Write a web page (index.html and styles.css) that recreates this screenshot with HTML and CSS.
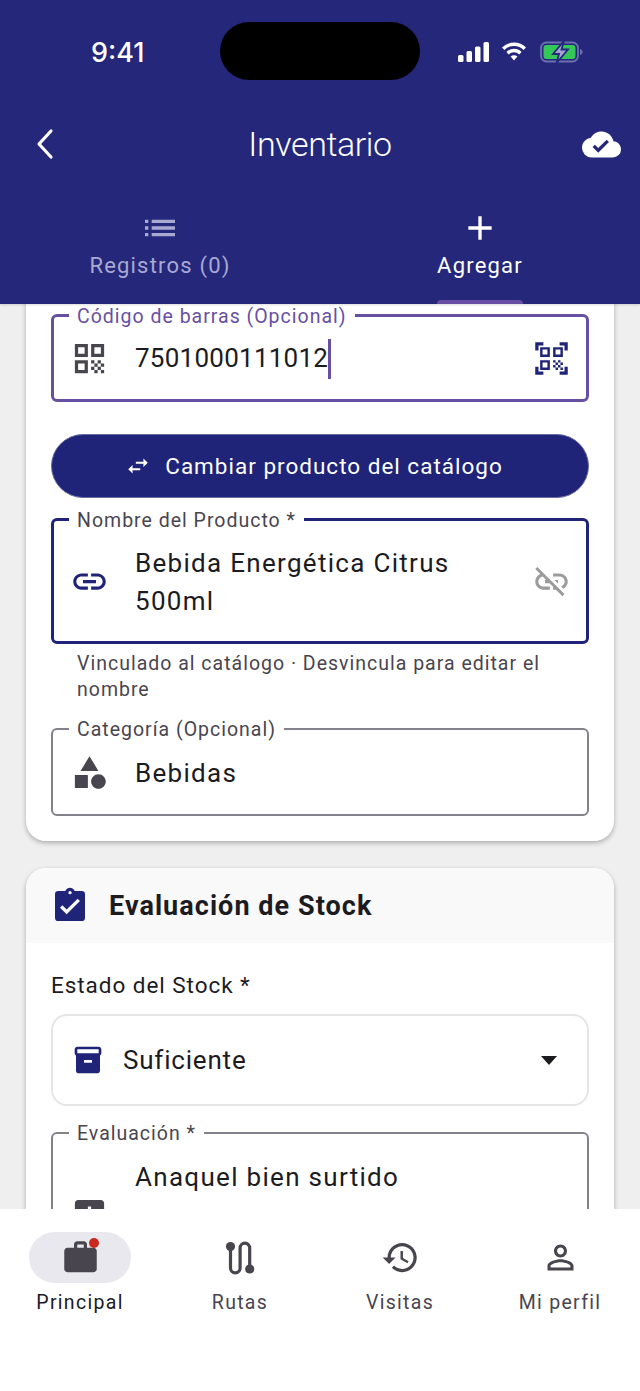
FILE: index.html
```html
<!DOCTYPE html>
<html lang="es">
<head>
<meta charset="utf-8">
<title>Inventario</title>
<link rel="stylesheet" href="styles.css">
</head>
<body>
<div class="app">
  <header class="header">
    <div class="status">
      <span class="time">9:41</span>
      <div class="island"></div>
      <div class="status-icons">
        <svg class="sig" viewBox="0 0 31 20"><rect x="0" y="13" width="5.5" height="7" rx="1.5"/><rect x="8.5" y="9" width="5.5" height="11" rx="1.5"/><rect x="17" y="4.5" width="5.5" height="15.5" rx="1.5"/><rect x="25.5" y="0" width="5.5" height="20" rx="1.5"/></svg>
        <svg class="wifi" viewBox="0 0 26 20"><path class="wifi-arc" d="M2.200 6.800a15.200 15.200 0 0 1 21.600 0"/><path class="wifi-arc" d="M6.600 11.200a9 9 0 0 1 12.800 0"/><path d="M9.600 14.600a4.800 4.800 0 0 1 6.800 0L13 18.500z"/></svg>
        <svg class="batt" viewBox="0 0 44 22"><rect x="1" y="1.500" width="37" height="19" rx="5.500" fill="none" stroke="#6d70ad" stroke-width="1.800"/><rect x="3.500" y="4" width="32" height="14" rx="3" fill="#34c759"/><path d="M40 8v6c1.600-.5 2.600-1.600 2.600-3S41.600 8.500 40 8z" fill="#6d70ad"/><path d="M24 0L13 13h6l-2.500 9L28 8.500h-6.500z" fill="#a2a4d4" stroke="#25277a" stroke-width="1.800"/></svg>
      </div>
    </div>
    <div class="titlebar">
      <svg class="back" viewBox="0 0 20 32"><path d="M16 3L4 16l12 13"/></svg>
      <h1 class="title">Inventario</h1>
      <svg class="cloud" viewBox="0 0 24 24"><path fill-rule="evenodd" d="M19.350 10.030C18.670 6.590 15.640 4 12 4 9.110 4 6.600 5.640 5.350 8.030 2.340 8.360 0 10.900 0 14a6 6 0 0 0 6 6h13a5 5 0 0 0 5-5c0-2.640-2.050-4.780-4.650-4.970M10 17l-3.500-3.500 1.410-1.410L10 14.170 15.180 9l1.410 1.410L10 17z"/></svg>
    </div>
    <div class="tabs">
      <div class="tab">
        <svg class="tab-icon" viewBox="0 0 24 24"><path d="M3 13h2v-2H3v2zm0 4h2v-2H3v2zm0-8h2V7H3v2zm4 4h14v-2H7v2zm0 4h14v-2H7v2zM7 7v2h14V7H7z"/></svg>
        <span class="tab-label">Registros (0)</span>
      </div>
      <div class="tab active">
        <svg class="tab-icon" viewBox="0 0 24 24"><path d="M19 13h-6v6h-2v-6H5v-2h6V5h2v6h6v2z"/></svg>
        <span class="tab-label">Agregar</span>
        <span class="indicator"></span>
      </div>
    </div>
  </header>

  <main class="main">
    <div class="scroll">
      <section class="card card-first">
        <div class="field focused">
          <span class="float-label">Código de barras (Opcional)</span>
          <svg class="icon-left" viewBox="0 0 24 24"><path d="M3 11h8V3H3v8zm2-6h4v4H5V5zM3 21h8v-8H3v8zm2-6h4v4H5v-4zM13 3v8h8V3h-8zm6 6h-4V5h4v4zM13 13h2v2h-2zM15 15h2v2h-2zM13 17h2v2h-2zM15 19h2v2h-2zM17 17h2v2h-2zM17 13h2v2h-2zM19 15h2v2h-2zM19 19h2v2h-2z"/></svg>
          <div class="value">7501000111012<span class="caret"></span></div>
          <svg class="icon-right navy" viewBox="0 0 24 24"><path d="M9.500 6.500v3h-3v-3h3M11 5H5v6h6V5zm-1.500 9.500v3h-3v-3h3M11 13H5v6h6v-6zm6.500-6.500v3h-3v-3h3M19 5h-6v6h6V5zm-6 8h1.500v1.500H13V13zm1.500 1.500H16V16h-1.500v-1.500zM16 13h1.500v1.500H16V13zm-3 3h1.500v1.500H13V16zm1.500 1.500H16V19h-1.500v-1.500zM16 16h1.500v1.500H16V16zm1.500-1.500H19V16h-1.500v-1.500zm0 3H19V19h-1.500v-1.500zM22 7h-2V4h-3V2h5v5zm0 15v-5h-2v3h-3v2h5zM2 22h5v-2H4v-3H2v5zM2 2v5h2V4h3V2H2z"/></svg>
        </div>

        <button class="swap-btn" type="button">
          <svg class="swap-icon" viewBox="0 0 24 24"><path d="M21 9l-4-4v3h-7v2h7v3M7 11l-4 4 4 4v-3h7v-2H7v-3z"/></svg>
          <span>Cambiar producto del catálogo</span>
        </button>

        <div class="field linked">
          <span class="float-label">Nombre del Producto *</span>
          <svg class="icon-left navy" viewBox="0 0 24 24"><path d="M3.900 12c0-1.710 1.390-3.100 3.100-3.100h4V7H7c-2.760 0-5 2.240-5 5s2.240 5 5 5h4v-1.900H7c-1.710 0-3.100-1.390-3.100-3.100zM8 13h8v-2H8v2zm9-6h-4v1.900h4c1.710 0 3.100 1.390 3.100 3.100s-1.390 3.100-3.100 3.100h-4V17h4c2.760 0 5-2.240 5-5s-2.240-5-5-5z"/></svg>
          <div class="value">Bebida Energética Citrus 500ml</div>
          <svg class="icon-right muted" viewBox="0 0 24 24"><path d="M17 7h-4v1.900h4c1.710 0 3.100 1.390 3.100 3.100 0 1.430-.980 2.630-2.310 2.980l1.460 1.460C20.880 15.610 22 13.950 22 12c0-2.760-2.240-5-5-5zm-1 4h-2.190l2 2H16zM2 4.270l3.110 3.110C3.290 8.120 2 9.910 2 12c0 2.760 2.240 5 5 5h4v-1.900H7c-1.710 0-3.100-1.390-3.100-3.100 0-1.590 1.210-2.900 2.760-3.070L8.730 11H8v2h2.730L13 15.270V17h1.730l4.010 4L20 19.740 3.270 3 2 4.270z"/></svg>
        </div>
        <p class="helper">Vinculado al catálogo · Desvincula para editar el nombre</p>

        <div class="field plain">
          <span class="float-label">Categoría (Opcional)</span>
          <svg class="icon-left" viewBox="0 0 24 24"><path d="M11 13.500v8H3v-8h8zM12 2l5.500 9h-11L12 2zm5.500 11c2.500 0 4.500 2 4.500 4.500S20 22 17.500 22 13 20 13 17.500s2-4.500 4.500-4.500z"/></svg>
          <div class="value">Bebidas</div>
        </div>
      </section>

      <section class="card card-second">
        <div class="card-head">
          <svg class="head-icon" viewBox="0 0 24 24"><path fill-rule="evenodd" d="M19 3h-4.180C14.400 1.840 13.300 1 12 1s-2.400.840-2.820 2H5a2 2 0 0 0-2 2v14a2 2 0 0 0 2 2h14a2 2 0 0 0 2-2V5a2 2 0 0 0-2-2M12 3a1 1 0 1 1 0 2 1 1 0 0 1 0-2m-2 14l-4-4 1.410-1.410L10 14.170l6.590-6.590L18 9l-8 8z"/></svg>
          <h2 class="head-title">Evaluación de Stock</h2>
        </div>
        <div class="card-body">
          <p class="stock-label">Estado del Stock *</p>
          <div class="select">
            <svg class="select-icon" viewBox="0 0 24 24"><path d="M20 2H4c-1 0-2 .900-2 2v3.010c0 .720.430 1.340 1 1.690V20c0 1.100 1.100 2 2 2h14c.900 0 2-.900 2-2V8.700c.570-.350 1-.970 1-1.690V4c0-1.100-1-2-2-2zm-5 12H9v-2h6v2zm5-7H4V4l16-.020V7z"/></svg>
            <span class="select-value">Suficiente</span>
            <span class="select-arrow"></span>
          </div>
          <div class="field plain">
            <span class="float-label">Evaluación *</span>
            <svg class="icon-left" viewBox="0 0 24 24"><path d="M19 3H5c-1.110 0-2 .900-2 2v14c0 1.100.890 2 2 2h14c1.100 0 2-.900 2-2V5c0-1.110-.900-2-2-2zm-2 10h-4v4h-2v-4H7v-2h4V7h2v4h4v2z"/></svg>
            <div class="value">Anaquel bien surtido<br>&nbsp;<br>&nbsp;</div>
          </div>
        </div>
      </section>
    </div>
  </main>

  <nav class="nav">
    <div class="nav-item current">
      <div class="nav-pill">
        <svg class="nav-icon" viewBox="0 0 24 24"><path d="M20 6h-4V4c0-1.110-.890-2-2-2h-4c-1.110 0-2 .890-2 2v2H4c-1.110 0-1.990.890-1.990 2L2 19c0 1.110.890 2 2 2h16c1.110 0 2-.890 2-2V8c0-1.110-.890-2-2-2zm-6 0h-4V4h4v2z"/></svg>
        <span class="dot"></span>
      </div>
      <span class="nav-label">Principal</span>
    </div>
    <div class="nav-item">
      <div class="nav-pill">
        <svg class="nav-icon route" viewBox="0 0 30 34"><path d="M5.500 5v22a4.800 4.800 0 0 0 9.600 0V7a4.800 4.800 0 0 1 9.600 0v22" fill="none"/><circle cx="5.500" cy="5.500" r="4.600"/><circle cx="24.700" cy="28" r="4.600"/></svg>
      </div>
      <span class="nav-label">Rutas</span>
    </div>
    <div class="nav-item">
      <div class="nav-pill">
        <svg class="nav-icon" viewBox="0 0 24 24"><path d="M13 3c-4.970 0-9 4.030-9 9H1l3.890 3.890.070.140L9 12H6c0-3.870 3.130-7 7-7s7 3.130 7 7-3.130 7-7 7c-1.930 0-3.680-.790-4.940-2.060l-1.420 1.420C8.270 19.990 10.510 21 13 21c4.970 0 9-4.030 9-9s-4.030-9-9-9zm-1 5v5l4.280 2.540.720-1.210-3.500-2.080V8H12z"/></svg>
      </div>
      <span class="nav-label">Visitas</span>
    </div>
    <div class="nav-item">
      <div class="nav-pill">
        <svg class="nav-icon" viewBox="0 0 24 24"><path d="M12 5.900c1.160 0 2.100.940 2.100 2.100s-.940 2.100-2.100 2.100S9.900 9.160 9.900 8s.940-2.100 2.100-2.100m0 9c2.970 0 6.100 1.460 6.100 2.100v1.100H5.900V17c0-.640 3.130-2.100 6.100-2.100M12 4C9.790 4 8 5.790 8 8s1.790 4 4 4 4-1.790 4-4-1.790-4-4-4zm0 9c-2.670 0-8 1.340-8 4v3h16v-3c0-2.660-5.330-4-8-4z"/></svg>
      </div>
      <span class="nav-label">Mi perfil</span>
    </div>
  </nav>
</div>
</body>
</html>
```

FILE: styles.css
```css
* { box-sizing: border-box; }
html, body { margin: 0; padding: 0; height: 100%; }
body { font-family: Roboto, "Noto Sans", sans-serif; color: #1c1b1f; background: #efefef; }
.app { width: 640px; height: 1391px; display: flex; flex-direction: column; overflow: hidden; }

.header { position: relative; z-index: 2; height: 304px; flex: none; background: #25277a; color: #fff; box-shadow: 0 1px 2px rgba(0,0,0,.15); }
.status { position: relative; height: 104px; display: flex; align-items: center; justify-content: space-between; padding: 0 56px 0 91px; }
.time { font-family: Inter, Roboto, sans-serif; font-size: 27px; font-weight: 500; letter-spacing: 0; }
.island { position: absolute; left: 220px; top: 22px; width: 200px; height: 58px; border-radius: 29px; background: #000; }
.status-icons { display: flex; align-items: center; gap: 12px; }
.sig { width: 31px; height: 20px; fill: #fff; }
.wifi { width: 26px; height: 20px; fill: #fff; }
.wifi-arc { fill: none; stroke: #fff; stroke-width: 3.400; }
.batt { width: 44px; height: 22px; margin-left: 1px; }

.titlebar { height: 80px; display: flex; align-items: center; justify-content: space-between; padding: 0 19px 0 35px; position: relative; }
.back { width: 20px; height: 32px; fill: none; stroke: #fff; stroke-width: 3.200; stroke-linecap: round; stroke-linejoin: round; }
.title { position: absolute; left: 0; right: 0; top: 0; margin: 0; text-align: center; font-size: 34px; line-height: 80px; font-weight: 300; letter-spacing: -0.400px; }
.cloud { width: 39px; height: 39px; fill: #fff; }

.tabs { display: flex; height: 120px; }
.tab { position: relative; flex: 1; display: flex; flex-direction: column; align-items: center; padding-top: 24px; color: #a8a9d3; }
.tab.active { color: #fff; }
.tab-icon { width: 40px; height: 40px; fill: currentColor; display: block; }
.tab-label { font-size: 22px; line-height: 36px; letter-spacing: 1.200px; }
.indicator { position: absolute; bottom: 0; left: 117px; width: 86px; height: 4px; border-radius: 4px 4px 0 0; background: #6750a4; }

.main { flex: 1; min-height: 0; overflow: hidden; position: relative; }
.scroll { margin-top: -40px; padding: 0 26px; display: flex; flex-direction: column; gap: 27px; }
.card { background: #fff; border-radius: 20px; box-shadow: 0 2px 5px rgba(0,0,0,.28); }
.card-first { padding: 50px 25px 25px; }
.card-head { height: 75px; display: flex; align-items: center; gap: 19px; padding: 0 24px; background: #f9f9f9; border-radius: 20px 20px 0 0; }
.head-icon { width: 40px; height: 40px; fill: #1f2478; flex: none; }
.head-title { margin: 0; font-size: 27px; font-weight: 700; letter-spacing: 1.050px; color: #1c1b1f; }
.card-body { padding: 29px 25px 25px; }

.field { position: relative; display: flex; align-items: center; border-radius: 6px; border: 2px solid #85818a; padding: 23px 15px 23px 17px; }
.field.focused { border: 3px solid #6750a4; padding: 22px 15px 22px 16px; }
.field.focused .float-label { color: #6750a4; left: 15px; }
.field.linked { border: 3px solid #1f2478; padding: 22px 15px 22px 16px; }
.field.linked .float-label { left: 15px; }
.float-label { position: absolute; left: 16px; top: -11px; padding: 0 8px; background: #fff; font-size: 19.500px; line-height: 22px; letter-spacing: 1px; color: #49454f; white-space: nowrap; }
.icon-left { width: 39px; height: 39px; margin: -1px 0; fill: #49454f; flex: none; }
.icon-right { width: 39px; height: 39px; flex: none; margin: -1px 0 -1px auto; }
.navy { fill: #1f2478; }
.icon-right.muted { fill: #9b9b9b; }
.value { flex: 1; min-width: 0; margin: 1px 0 -1px 26px; padding-right: 40px; font-size: 26px; line-height: 38px; letter-spacing: 1.300px; color: #1c1b1f; }
.field.focused .value { letter-spacing: 0.250px; height: 38px; margin: 0 0 0 26px; }
.caret { display: inline-block; width: 2.500px; height: 40px; background: #6750a4; vertical-align: middle; margin: -4px 0 -2px; }

.swap-btn { display: flex; align-items: center; justify-content: center; gap: 14px; width: 100%; height: 64px; margin-top: 32px; margin-bottom: 20px; padding: 0 12px 0 0; border-radius: 32px; border: 1.500px solid #6b6d9e; background: #1f2478; color: #fff; font-family: inherit; font-size: 22.500px; font-weight: 400; letter-spacing: 1px; }
.swap-icon { width: 26px; height: 26px; fill: #fff; }

.helper { margin: 7px 0 25px; padding: 0 26px; font-size: 19.500px; line-height: 26px; letter-spacing: 1px; color: #49454f; }

.stock-label { margin: 0 0 16px; font-size: 22.500px; line-height: 26px; letter-spacing: 0.950px; color: #1c1b1f; }
.select { display: flex; align-items: center; height: 92px; margin-bottom: 26px; padding: 0 30px 0 19px; border: 2px solid #e6e6e6; border-radius: 16px; }
.select-icon { width: 32px; height: 32px; fill: #1f2478; flex: none; }
.select-value { margin-left: 19px; font-size: 26px; letter-spacing: 0.800px; }
.select-arrow { margin-left: auto; width: 0; height: 0; border-left: 8px solid transparent; border-right: 8px solid transparent; border-top: 9px solid #1c1b1f; }

.nav { position: relative; z-index: 2; height: 182px; flex: none; background: #fff; display: flex; padding-top: 23px; }
.nav-item { flex: 1; display: flex; flex-direction: column; align-items: center; }
.nav-pill { position: relative; width: 102px; height: 51px; border-radius: 26px; display: flex; align-items: center; justify-content: center; }
.current .nav-pill { background: #e9e8ef; }
.nav-icon { width: 39px; height: 39px; fill: #49454f; }
.nav-icon.route { width: 30px; height: 34px; }
.route path { stroke: #49454f; stroke-width: 3.200; }
.dot { position: absolute; left: 60px; top: 6px; width: 10px; height: 10px; border-radius: 50%; background: #c8281e; }
.nav-label { margin-top: 8px; font-size: 19.500px; line-height: 24px; letter-spacing: 1.300px; color: #49454f; }
.current .nav-label { color: #1c1b1f; }
```
